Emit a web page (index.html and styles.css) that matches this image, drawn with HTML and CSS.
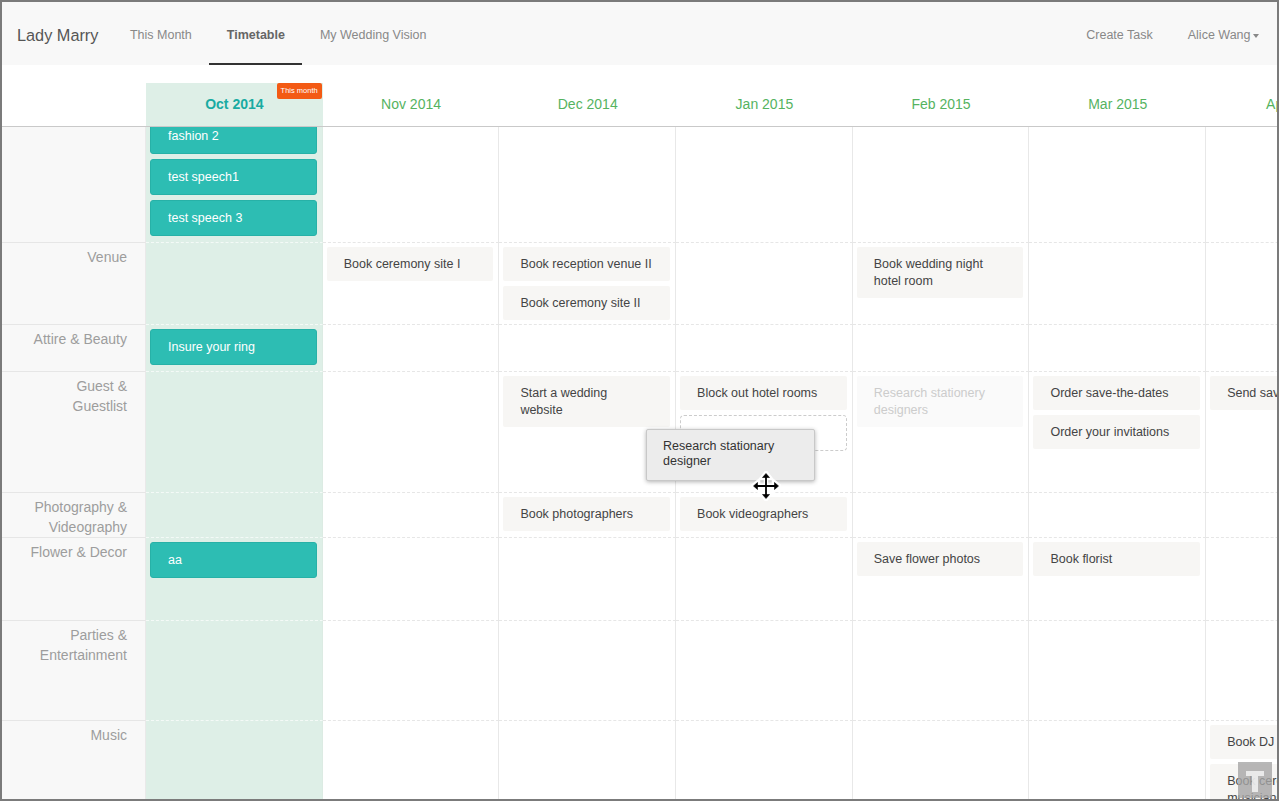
FILE: index.html
```html
<!DOCTYPE html>
<html lang="en">
<head>
    <meta charset="UTF-8">
    <meta name="viewport" content="width=device-width, initial-scale=1.0">
    <title>Lady Marry - Timetable</title>
    <link rel="stylesheet" href="styles.css">
</head>
<body>
    <div class="frame">
        <nav class="navbar">
            <a class="brand" href="#">Lady Marry</a>
            <a class="nav-link" href="#">This Month</a>
            <a class="nav-link active" href="#">Timetable</a>
            <a class="nav-link" href="#">My Wedding Vision</a>
            <div class="nav-right">
                <a class="nav-link" href="#">Create Task</a>
                <a class="nav-link" href="#">Alice Wang<span class="caret"></span></a>
            </div>
        </nav>

        <div class="months">
            <div class="month-blank"></div>
            <div class="month now">Oct 2014<span class="badge">This month</span></div>
            <div class="month">Nov 2014</div>
            <div class="month">Dec 2014</div>
            <div class="month">Jan 2015</div>
            <div class="month">Feb 2015</div>
            <div class="month">Mar 2015</div>
            <div class="month">Apr 2015</div>
        </div>

        <div class="board">
            <div class="board-inner">
                <div class="row first">
                    <div class="label"></div>
                    <div class="cell now">
                        <div class="task done">fashion 2</div>
                        <div class="task done">test speech1</div>
                        <div class="task done">test speech 3</div>
                    </div>
                    <div class="cell"></div><div class="cell"></div><div class="cell"></div>
                    <div class="cell"></div><div class="cell"></div><div class="cell"></div>
                </div>

                <div class="row venue">
                    <div class="label">Venue</div>
                    <div class="cell now"></div>
                    <div class="cell"><div class="task">Book ceremony site I</div></div>
                    <div class="cell">
                        <div class="task nowrap">Book reception venue II</div>
                        <div class="task">Book ceremony site II</div>
                    </div>
                    <div class="cell"></div>
                    <div class="cell"><div class="task">Book wedding night hotel room</div></div>
                    <div class="cell"></div><div class="cell"></div>
                </div>

                <div class="row attire">
                    <div class="label">Attire &amp; Beauty</div>
                    <div class="cell now"><div class="task done">Insure your ring</div></div>
                    <div class="cell"></div><div class="cell"></div><div class="cell"></div>
                    <div class="cell"></div><div class="cell"></div><div class="cell"></div>
                </div>

                <div class="row guest">
                    <div class="label">Guest &amp;<br>Guestlist</div>
                    <div class="cell now"></div>
                    <div class="cell"></div>
                    <div class="cell"><div class="task">Start a wedding website</div></div>
                    <div class="cell">
                        <div class="task">Block out hotel rooms</div>
                        <div class="slot"></div>
                    </div>
                    <div class="cell"><div class="task ghost">Research stationery designers</div></div>
                    <div class="cell">
                        <div class="task">Order save-the-dates</div>
                        <div class="task">Order your invitations</div>
                    </div>
                    <div class="cell"><div class="task nowrap">Send save-the-dates</div></div>
                </div>

                <div class="row photo">
                    <div class="label">Photography &amp;<br>Videography</div>
                    <div class="cell now"></div>
                    <div class="cell"></div>
                    <div class="cell"><div class="task">Book photographers</div></div>
                    <div class="cell"><div class="task">Book videographers</div></div>
                    <div class="cell"></div><div class="cell"></div><div class="cell"></div>
                </div>

                <div class="row flower">
                    <div class="label">Flower &amp; Decor</div>
                    <div class="cell now"><div class="task done">aa</div></div>
                    <div class="cell"></div><div class="cell"></div><div class="cell"></div>
                    <div class="cell"><div class="task">Save flower photos</div></div>
                    <div class="cell"><div class="task">Book florist</div></div>
                    <div class="cell"></div>
                </div>

                <div class="row parties">
                    <div class="label">Parties &amp;<br>Entertainment</div>
                    <div class="cell now"></div>
                    <div class="cell"></div><div class="cell"></div><div class="cell"></div>
                    <div class="cell"></div><div class="cell"></div><div class="cell"></div>
                </div>

                <div class="row music">
                    <div class="label">Music</div>
                    <div class="cell now"></div>
                    <div class="cell"></div><div class="cell"></div><div class="cell"></div>
                    <div class="cell"></div><div class="cell"></div>
                    <div class="cell">
                        <div class="task nowrap">Book DJ</div>
                        <div class="task">Book ceremony musicians</div>
                    </div>
                </div>
            </div>
        </div>

        <!-- card being dragged -->
        <div class="drag-card">Research stationary designer</div>
        <svg class="move-cursor" width="30" height="30" viewBox="0 0 30 30">
            <g stroke="#fff" stroke-width="4.5" stroke-linecap="round" fill="#fff">
                <path d="M15 4 V26 M4 15 H26"/>
                <path d="M15 2 L19 7 H11 Z M15 28 L19 23 H11 Z M2 15 L7 11 V19 Z M28 15 L23 11 V19 Z"/>
            </g>
            <g stroke="#000" stroke-width="1.8" fill="#000">
                <path d="M15 5 V25 M5 15 H25"/>
                <path d="M15 2.5 L18.5 6.5 H11.5 Z M15 27.5 L18.5 23.5 H11.5 Z M2.5 15 L6.5 11.5 V18.5 Z M27.5 15 L23.5 11.5 V18.5 Z" stroke-width="0.6"/>
            </g>
        </svg>

        <a class="to-top" href="#">
            <svg width="34" height="36" viewBox="0 0 34 36">
                <rect x="8" y="9" width="18" height="5" fill="rgba(255,255,255,0.7)"/>
                <rect x="14" y="14" width="6" height="16" fill="rgba(255,255,255,0.7)"/>
            </svg>
        </a>
    </div>
</body>
</html>
```

FILE: styles.css
```css
* {
    box-sizing: border-box;
}
body {
    margin: 0;
    font-family: "Liberation Sans", Arial, sans-serif;
    background: #fff;
    overflow: hidden;
}
.frame {
    position: relative;
    width: 1279px;
    height: 801px;
    border: 2px solid #7b7b7b;
    overflow: hidden;
}
a {
    text-decoration: none;
}

/* top bar */
.navbar {
    display: flex;
    align-items: center;
    height: 63px;
    background: #f8f8f8;
    padding-left: 15px;
}
.brand {
    padding-top: 3px;
    font-size: 16.3px;
    color: #555;
    margin-right: 14px;
}
.nav-link {
    display: block;
    height: 63px;
    padding: 3px 17.5px 0;
    line-height: 60px;
    font-size: 12.5px;
    color: #888;
}
.nav-link.active {
    font-weight: bold;
    color: #666;
    box-shadow: inset 0 -2px 0 #333;
}
.nav-right {
    display: flex;
    margin-left: auto;
    padding-right: 1px;
}
.caret {
    display: inline-block;
    margin-left: 2px;
    vertical-align: middle;
    border-top: 4px solid #888;
    border-left: 3.5px solid transparent;
    border-right: 3.5px solid transparent;
}

/* month header */
.months {
    display: grid;
    grid-template-columns: 144px repeat(7, 176.7px);
    padding-top: 18px;
    border-bottom: 1px solid #c9c9c9;
}
.month {
    position: relative;
    height: 43px;
    line-height: 42px;
    text-align: center;
    font-size: 14px;
    color: #55b35f;
}
.month.now {
    background: #deefe7;
    color: #19aba2;
    font-weight: bold;
}
.badge {
    position: absolute;
    top: 0;
    right: 1px;
    height: 16px;
    line-height: 16px;
    padding: 0 4px;
    font-size: 7.5px;
    font-weight: normal;
    color: #fff;
    background: #f35a14;
    border-radius: 2px;
}

/* timetable body */
.board {
    height: 674px;
    overflow: hidden;
}
.board-inner {
    margin-top: -13px;
}
.row {
    display: grid;
    grid-template-columns: 144px repeat(7, 176.7px);
}
.row.first { min-height: 128px; }
.row.venue { min-height: 82px; }
.row.attire { min-height: 47px; }
.row.guest { min-height: 121px; }
.row.photo { min-height: 45px; }
.row.flower { min-height: 83px; }
.row.parties { min-height: 100px; }
.row.music { min-height: 120px; }

.label {
    background: #f8f8f8;
    border-top: 1px solid #e6e6e6;
    border-right: 1px solid #e9e9e9;
    padding: 4px 18px 0 0;
    text-align: right;
    font-size: 14px;
    line-height: 20px;
    color: #9d9d9d;
}
.row.first .label,
.row.first .cell {
    border-top: none;
}
.cell {
    display: flex;
    flex-direction: column;
    gap: 5px;
    padding: 4px 5px 4px 4px;
    border-top: 1px dashed #e6e6e6;
    border-right: 1px solid #e8e8e8;
}
.cell.now {
    background: #deefe7;
    border-top-color: #f4faf7;
    border-right-color: #dcebe3;
}

.task {
    padding: 9px 22px 8px 17px;
    font-size: 12.5px;
    line-height: 17px;
    color: #444;
    background: #f7f6f4;
    border-radius: 2px;
}
.task.done {
    padding: 9px 17px 8px;
    color: #fff;
    background: #2dbdb3;
    border: 1px solid #27b1a7;
    border-radius: 3px;
}
.task.ghost {
    color: #ccc;
    background: #fafafa;
}
.task.nowrap {
    white-space: nowrap;
}
.slot {
    height: 36px;
    border: 1px dashed #ccc;
    border-radius: 4px;
}

/* drag state */
.drag-card {
    position: absolute;
    left: 644px;
    top: 427px;
    width: 169px;
    height: 52px;
    padding: 9px 16px;
    font-size: 12.5px;
    line-height: 15px;
    color: #333;
    background: #ececec;
    border: 1px solid #c8c8c8;
    border-radius: 2px;
    box-shadow: 0 1px 4px rgba(0, 0, 0, 0.3);
}
.move-cursor {
    position: absolute;
    left: 749px;
    top: 469px;
}
.to-top {
    position: absolute;
    left: 1236px;
    top: 760px;
    width: 34px;
    height: 36px;
    background: rgba(165, 165, 165, 0.8);
}
.to-top svg {
    display: block;
}
```
